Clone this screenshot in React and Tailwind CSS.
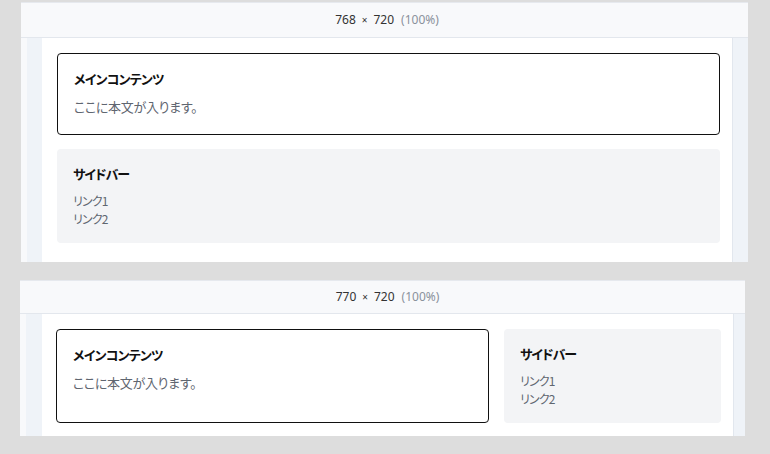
export default function App() {
  const jp = "[font-family:'Noto_Sans_CJK_JP','Noto_Sans',sans-serif] [font-feature-settings:'palt']";
  const Header = ({ w, h }) => (
    <div className={`flex items-center justify-center border-b border-[#e3e7ed] ${h} [font-family:'Noto_Sans',sans-serif] text-[12px] leading-4`}>
      <span className="text-[#333]">{w}</span>
      <span className="mx-[6px] text-[10px] text-[#333]">×</span>
      <span className="text-[#333]">720</span>
      <span className="ml-[7px] text-[#8a919b]">(100%)</span>
    </div>
  );
  const Main = ({ extra = "" }) => (
    <div className={`rounded-[4px] border border-[#111] bg-white px-4 pb-[17px] pt-[15px] ${extra}`}>
      <div className="text-[13px] font-bold leading-5 tracking-[-0.8px] text-[#111]">メインコンテンツ</div>
      <p className="mt-2 text-[13px] leading-5 tracking-[-0.3px] text-[#5f6670]">ここに本文が入ります。</p>
    </div>
  );
  const Side = ({ extra = "" }) => (
    <div className={`rounded-[4px] bg-[#f3f4f6] px-4 pb-[15px] pt-[15px] ${extra}`}>
      <div className="text-[13px] font-bold leading-5 tracking-[-1px] text-[#111]">サイドバー</div>
      <ul className="mt-2 text-[12px] leading-[18px] tracking-[-0.8px] text-[#5f6670]">
        <li>リンク1</li>
        <li>リンク2</li>
      </ul>
    </div>
  );
  return (
    <div className={`h-[454px] w-full overflow-hidden bg-[#dddddd] pt-[2px] ${jp}`}>
      <div className="ml-[21px] flex h-[260px] w-[727px] flex-col border-t border-[#e6e9ee] bg-[#f8f9fb]">
        <Header w="768" h="h-[35px] pl-[21px] pr-[16px]" />
        <div className="flex min-h-0 flex-1">
          <div className="w-[6px]" />
          <div className="w-[15px] bg-[#eff3f8]" />
          <div className="flex flex-1 flex-col gap-[14px] overflow-hidden bg-white pl-[15px] pr-[12px] pt-[15px]">
            <Main />
            <Side />
          </div>
          <div className="w-[16px] border-l border-[#e2e7ee] bg-[#eff3f8]" />
        </div>
      </div>
      <div className="ml-[20px] mt-[18px] flex h-[156px] w-[725px] flex-col border-t border-[#e6e9ee] bg-[#f8f9fb]">
        <Header w="770" h="h-[33px] pl-[22px] pr-[12px]" />
        <div className="flex min-h-0 flex-1">
          <div className="w-[6px]" />
          <div className="w-[16px] bg-[#eff3f8]" />
          <div className="flex flex-1 items-start gap-[15px] overflow-hidden bg-white pl-[14px] pr-[12px] pt-[15px]">
            <Main extra="h-[94px] flex-1" />
            <Side extra="h-[94px] w-[217px]" />
          </div>
          <div className="w-[12px] border-l border-[#e2e7ee] bg-[#eff3f8]" />
        </div>
      </div>
    </div>
  );
}
